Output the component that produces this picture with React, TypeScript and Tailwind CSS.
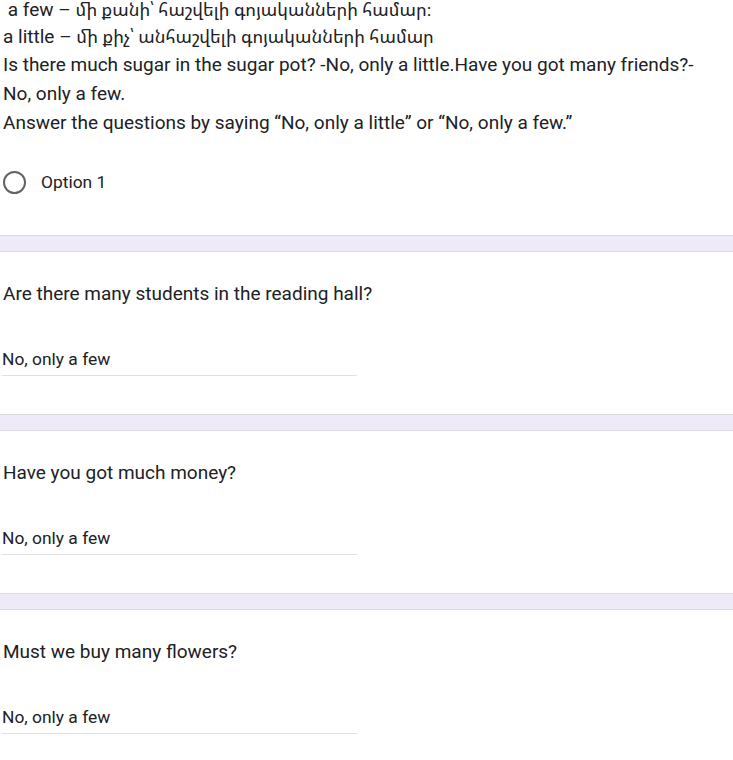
import React from "react";

const questions = [
  "Are there many students in the reading hall?",
  "Have you got much money?",
  "Must we buy many flowers?",
];

function Band() {
  return <div className="h-[17px] border-y border-[#dadce0] bg-[#eeeaf8]" />;
}

// Armenian glyphs come from a fallback font; shrink a bit to match the reference widths
function Hy({ children }: { children: React.ReactNode }) {
  return <span className="text-[17.9px]">{children}</span>;
}

export default function App() {
  return (
    <div
      className="min-h-screen bg-white text-[#202124]"
      style={{ fontFamily: 'Roboto, "Noto Sans Armenian", "DejaVu Sans", sans-serif' }}
    >
      <div className="px-[3px] text-[19px] leading-[28.7px]">
        <div className="whitespace-pre leading-[20px]">
          {" a few – "}
          <Hy>մի քանի՝ հաշվելի գոյականների համար։</Hy>
        </div>
        <div className="mt-[2.6px]">
          a little – <Hy>մի քիչ՝ անհաշվելի գոյականների համար</Hy>
        </div>
        <div>
          Is there much sugar in the sugar pot? -No, only a little.Have you got many friends?-
          <br />
          No, only a few.
        </div>
        <div>Answer the questions by saying “No, only a little” or “No, only a few.”</div>
      </div>

      <div className="flex items-center gap-[15px] pl-[3px] pt-[33px] pb-[41px]">
        <div className="h-[23px] w-[23px] rounded-full border-2 border-[#5f6368]" />
        <span className="text-[17.4px] leading-6">Option 1</span>
      </div>

      {questions.map((q) => (
        <div key={q}>
          <Band />
          <div className="px-[3px] pt-[30px] text-[19px] leading-6">{q}</div>
          <div className="mt-[41px] w-[355px] ml-[2px] border-b border-[#e0e0e0] pb-[4px] text-[17.4px] leading-6">
            No, only a few
          </div>
          <div className="h-[38px]" />
        </div>
      ))}
    </div>
  );
}
